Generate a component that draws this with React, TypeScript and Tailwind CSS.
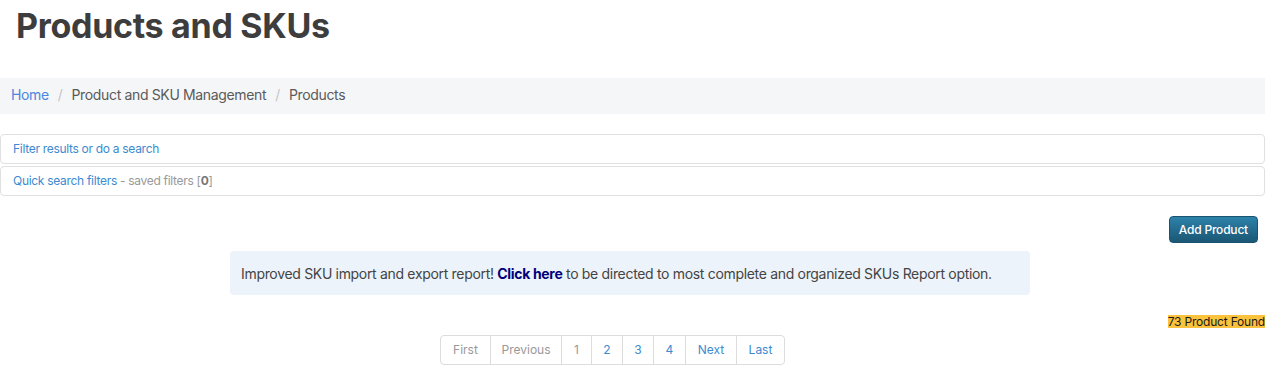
const PAGES = [
  { label: "First", w: "w-[49px]", muted: true },
  { label: "Previous", w: "w-[71px]", muted: true },
  { label: "1", w: "w-[30px]", muted: true },
  { label: "2", w: "w-[31px]", muted: false },
  { label: "3", w: "w-[31px]", muted: false },
  { label: "4", w: "w-[32px]", muted: false },
  { label: "Next", w: "w-[51px]", muted: false },
  { label: "Last", w: "w-[48px]", muted: false },
];

const App = () => {
  return (
    <div className="w-[1265px] bg-white font-['Inter',sans-serif] text-[#444]">
      {/* Page title */}
      <h1 className="pl-[16px] pt-[4px] h-[78px] text-[34px] font-bold leading-[44px] tracking-[-0.3px] text-[#3d3d3d]">
        Products and SKUs
      </h1>

      {/* Breadcrumb */}
      <div className="flex items-center h-[36px] pb-[3px] bg-[#f5f6f8] px-[11px] text-[14px] tracking-[-0.35px]">
        <span className="text-[#4a86e0]">Home</span>
        <span className="px-[9px] text-[#c5c5c5]">/</span>
        <span className="text-[#5a5a5a]">Product and SKU Management</span>
        <span className="px-[9px] text-[#c5c5c5]">/</span>
        <span className="text-[#5a5a5a]">Products</span>
      </div>

      {/* Filter panels */}
      <div className="mt-[20px] flex flex-col gap-[2px]">
        <div className="h-[30px] flex items-center px-[12px] border border-[#e0e0e0] rounded-[4px] text-[12px] tracking-[-0.3px] text-[#3c8ad0]">
          Filter results or do a search
        </div>
        <div className="h-[30px] flex items-center px-[12px] border border-[#e0e0e0] rounded-[4px] text-[12px] tracking-[-0.3px]">
          <span className="text-[#3c8ad0]">Quick search filters</span>
          <span className="text-[#999] ml-[3px]">- saved filters [<b className="text-[#777]">0</b>]</span>
        </div>
      </div>

      {/* Add product */}
      <div className="flex justify-end pr-[7px] mt-[20px]">
        <button className="h-[27px] px-[9px] rounded-[4px] bg-gradient-to-b from-[#2d82aa] to-[#1b5775] border border-[#1a5370] text-white text-[12px] font-medium tracking-[-0.2px]">
          Add Product
        </button>
      </div>

      {/* Info alert */}
      <div className="flex justify-center pr-[5px] mt-[8px]">
        <div className="w-[800px] h-[44px] flex items-center px-[11px] rounded-[4px] bg-[#edf3fa] text-[14px] text-[#444] tracking-[-0.32px]">
          <span>
            Improved SKU import and export report!{" "}
            <b className="text-[#00007a]">Click here</b> to be directed to most complete and organized SKUs Report option.
          </span>
        </div>
      </div>

      {/* Count */}
      <div className="flex justify-end mt-[20px]">
        <span className="bg-[#fbc23d] text-[12px] leading-[13px] text-[#1a1a1a] tracking-[-0.2px]">73 Product Found</span>
      </div>

      {/* Pagination */}
      <div className="flex justify-center pr-[40px] mt-[7px]">
        <div className="flex h-[30px] border border-[#dcdcdc] rounded-[4px] overflow-hidden text-[12px]">
          {PAGES.map((p, i) => (
            <div
              key={p.label}
              className={`${p.w} flex items-center justify-center ${i > 0 ? "border-l border-[#dcdcdc]" : ""} ${p.muted ? "text-[#999]" : "text-[#3c8ad0]"}`}
            >
              {p.label}
            </div>
          ))}
        </div>
      </div>
    </div>
  );
};

export default App;
